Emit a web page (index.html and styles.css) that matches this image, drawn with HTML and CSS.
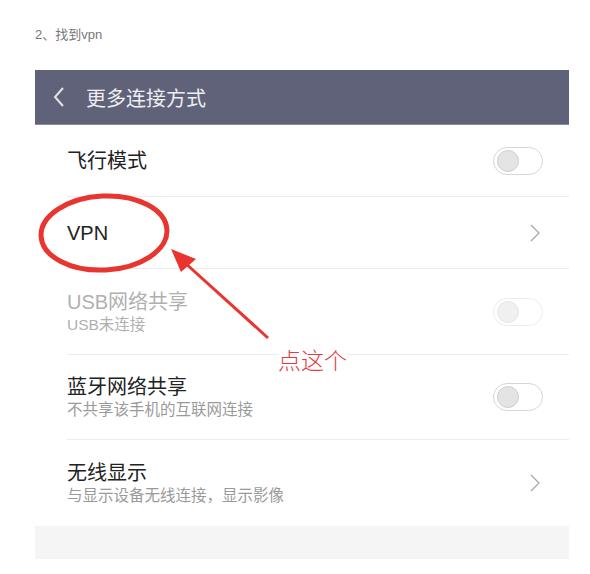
FILE: index.html
```html
<!DOCTYPE html>
<html lang="zh">
<head>
    <meta charset="UTF-8">
    <title>更多连接方式</title>
    <link rel="stylesheet" href="styles.css">
</head>
<body>
    <div class="step">2、找到vpn</div>

    <div class="screen">
        <div class="titlebar">
            <svg class="back" width="14" height="22" viewBox="0 0 14 22">
                <path d="M11 2 L3 11 L11 20" fill="none" stroke="#e3e4ea" stroke-width="2"/>
            </svg>
            <span class="title">更多连接方式</span>
        </div>

        <div class="list">
            <div class="row">
                <div class="label">
                    <div class="name">飞行模式</div>
                </div>
                <div class="switch"><span class="knob"></span></div>
            </div>
            <div class="row">
                <div class="label">
                    <div class="name">VPN</div>
                </div>
                <svg class="arrow" width="10" height="18" viewBox="0 0 10 18">
                    <path d="M1 1 L9 9 L1 17" fill="none" stroke="#a5a5a5" stroke-width="1.2"/>
                </svg>
            </div>
            <div class="row tall usb disabled">
                <div class="label">
                    <div class="name">USB网络共享</div>
                    <div class="sub">USB未连接</div>
                </div>
                <div class="switch"><span class="knob"></span></div>
            </div>
            <div class="row tall">
                <div class="label">
                    <div class="name">蓝牙网络共享</div>
                    <div class="sub">不共享该手机的互联网连接</div>
                </div>
                <div class="switch"><span class="knob"></span></div>
            </div>
            <div class="row tall last">
                <div class="label">
                    <div class="name">无线显示</div>
                    <div class="sub">与显示设备无线连接，显示影像</div>
                </div>
                <svg class="arrow" width="10" height="18" viewBox="0 0 10 18">
                    <path d="M1 1 L9 9 L1 17" fill="none" stroke="#a5a5a5" stroke-width="1.2"/>
                </svg>
            </div>
        </div>
        <div class="footer"></div>
    </div>

    <!-- 红色标注 -->
    <svg class="mark" width="590" height="574" viewBox="0 0 590 574">
        <ellipse cx="104" cy="233" rx="63" ry="37" fill="none" stroke="#e8352f" stroke-width="5" transform="rotate(-3 104 233)"/>
        <path d="M268 338 L184 262" stroke="#e8352f" stroke-width="3" fill="none"/>
        <path d="M171 249 L196 259 L181 272 Z" fill="#e8352f"/>
    </svg>
    <div class="note">点这个</div>
</body>
</html>
```

FILE: styles.css
```css
body {
    margin: 0;
    background-color: #fff;
    font-family: "Liberation Sans", "Noto Sans CJK SC", sans-serif;
}
.step {
    padding: 26px 0 0 35px;
    height: 18px;
    font-size: 13px;
    line-height: 18px;
    color: #777;
}
.screen {
    margin: 26px 0 0 35px;
    width: 534px;
}
.titlebar {
    height: 55px;
    display: flex;
    align-items: center;
    background-color: #5f6278;
    border-bottom: 1px solid #8a8c99;
    box-sizing: border-box;
}
.back {
    margin-left: 17px;
}
.title {
    margin-left: 20px;
    font-size: 20px;
    color: #eceef3;
}
.list {
    background-color: #fff;
}
.row {
    height: 72px;
    box-sizing: border-box;
    display: flex;
    align-items: center;
    justify-content: space-between;
    margin-left: 32px;
    padding-right: 26px;
    border-bottom: 1px solid #ececec;
}
.row.tall {
    height: 85px;
}
.row.usb {
    height: 86px;
}
.row.last {
    height: 86px;
    border-bottom: none;
}
.name {
    font-size: 20px;
    line-height: 26px;
    color: #222;
}
.sub {
    font-size: 15.5px;
    line-height: 20px;
    color: #9a9a9a;
}
.disabled .name,
.disabled .sub {
    color: #b0b0b0;
}
.switch {
    width: 50px;
    height: 28px;
    border: 1px solid #d6d6d6;
    border-radius: 15px;
    display: flex;
    align-items: center;
    padding-left: 3px;
    box-sizing: border-box;
}
.knob {
    width: 22px;
    height: 22px;
    border-radius: 50%;
    background-color: #e4e4e4;
    border: 1px solid #cfcfcf;
    box-sizing: border-box;
}
.disabled .switch {
    border-color: #ececec;
}
.disabled .knob {
    background-color: #f0f0f0;
    border-color: #e6e6e6;
}
.arrow {
    margin-right: 3px;
}
.footer {
    height: 33px;
    background-color: #f5f5f5;
}
.mark {
    position: absolute;
    left: 0;
    top: 0;
}
.note {
    position: absolute;
    left: 278px;
    top: 342px;
    font-size: 23px;
    color: #e33b3f;
    font-family: "Noto Sans CJK SC", sans-serif;
    font-weight: 300;
    background-color: rgba(255,255,255,0.8);
}
```
